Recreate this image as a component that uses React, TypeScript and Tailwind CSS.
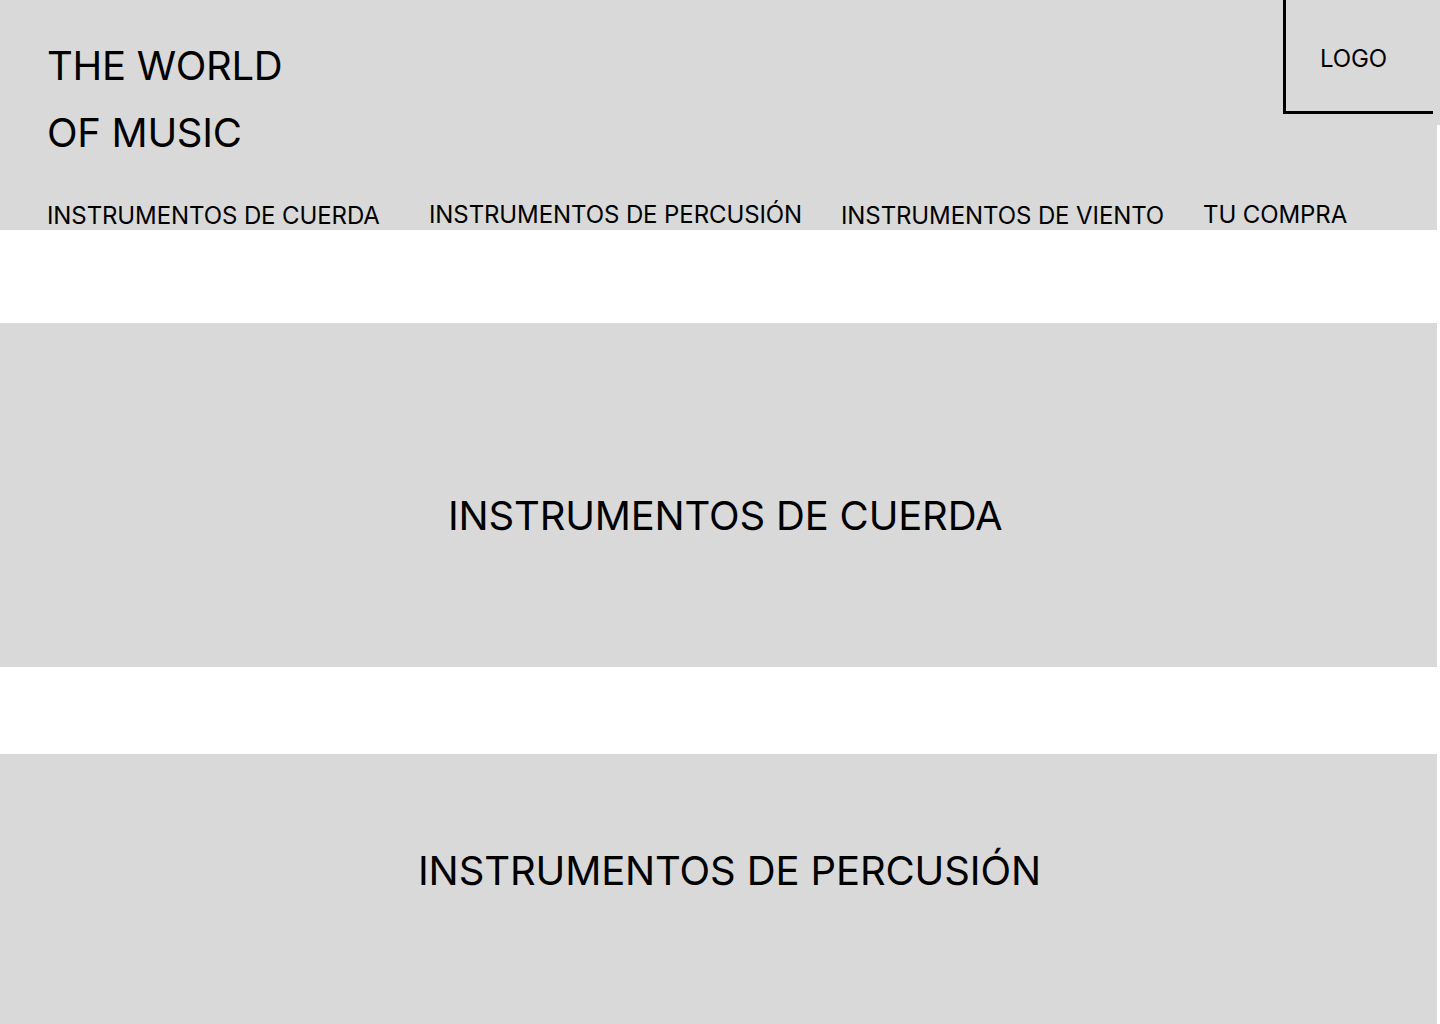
import React from "react";

const font = { fontFamily: "Inter, 'Liberation Sans', sans-serif" };

export default function App() {
  return (
    <div className="w-[1440px] bg-white text-black" style={font}>
      <header className="relative h-[230px] w-full bg-[#d9d9d9]">
        <div className="absolute right-0 top-[125px] h-[105px] w-[3px] bg-white" />
        <div className="flex items-start justify-between">
          <h1 className="ml-[47px] mt-[32px] text-[40px] font-normal leading-[67px] tracking-[-0.3px]">
            THE WORLD
            <br />
            OF MUSIC
          </h1>
          <div className="mr-[7px] flex h-[114px] w-[150px] items-start border-b-[3px] border-l-[3px] border-black pl-[34px] pt-[44px] text-[24px] leading-[30px] tracking-[-0.1px]">
            LOGO
          </div>
        </div>
        <nav className="absolute left-0 top-[202px] flex text-[24px] leading-[28px] tracking-[-0.1px]">
          <span className="ml-[47px] w-[382px]">INSTRUMENTOS DE CUERDA</span>
          <span className="-mt-px w-[412px]">INSTRUMENTOS DE PERCUSIÓN</span>
          <span className="w-[362px]">INSTRUMENTOS DE VIENTO</span>
          <span className="-mt-px">TU COMPRA</span>
        </nav>
      </header>

      <section className="mt-[93px] h-[344px] w-[1437px] bg-[#d9d9d9] pl-[448px] pt-[169px] text-[40px] leading-[48px] tracking-[-0.18px]">
        INSTRUMENTOS DE CUERDA
      </section>

      <section className="mt-[87px] h-[270px] w-[1437px] bg-[#d9d9d9] pl-[418px] pt-[93px] text-[40px] leading-[48px] tracking-[-0.12px]">
        INSTRUMENTOS DE PERCUSIÓN
      </section>
    </div>
  );
}
